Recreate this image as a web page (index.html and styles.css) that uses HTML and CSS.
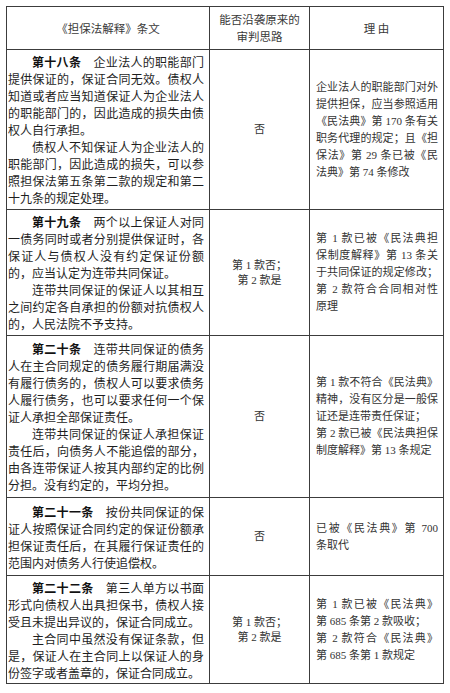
FILE: index.html
```html
<!DOCTYPE html>
<html lang="zh-CN">
<head>
<meta charset="utf-8">
<title>担保法解释条文对照</title>
<link rel="stylesheet" href="styles.css">
</head>
<body>
<div class="sheet">
  <div class="cell head">《担保法解释》条文</div>
  <div class="cell head">能否沿袭原来的<br>审判思路</div>
  <div class="cell head">理 由</div>

  <div class="cell clause">
    <p><b>第十八条</b>　企业法人的职能部门提供保证的，保证合同无效。债权人知道或者应当知道保证人为企业法人的职能部门的，因此造成的损失由债权人自行承担。</p>
    <p>债权人不知保证人为企业法人的职能部门，因此造成的损失，可以参照担保法第五条第二款的规定和第二十九条的规定处理。</p>
  </div>
  <div class="cell verdict">否</div>
  <div class="cell reason">
    <div class="ln">企业法人的职能部门对外</div>
    <div class="ln">提供担保，应当参照适用</div>
    <div class="ln">《民法典》第 170 条有关</div>
    <div class="ln">职务代理的规定；且《担</div>
    <div class="ln">保法》第 29 条已被《民</div>
    <div class="ln end">法典》第 74 条修改</div>
  </div>

  <div class="cell clause">
    <p><b>第十九条</b>　两个以上保证人对同一债务同时或者分别提供保证时，各保证人与债权人没有约定保证份额的，应当认定为连带共同保证。</p>
    <p>连带共同保证的保证人以其相互之间约定各自承担的份额对抗债权人的，人民法院不予支持。</p>
  </div>
  <div class="cell verdict">第 1 款否；<br>第 2 款是</div>
  <div class="cell reason">
    <div class="ln">第 1 款已被《民法典担</div>
    <div class="ln">保制度解释》第 13 条关</div>
    <div class="ln">于共同保证的规定修改；</div>
    <div class="ln">第 2 款符合合同相对性</div>
    <div class="ln end">原理</div>
  </div>

  <div class="cell clause">
    <p><b>第二十条</b>　连带共同保证的债务人在主合同规定的债务履行期届满没有履行债务的，债权人可以要求债务人履行债务，也可以要求任何一个保证人承担全部保证责任。</p>
    <p>连带共同保证的保证人承担保证责任后，向债务人不能追偿的部分，由各连带保证人按其内部约定的比例分担。没有约定的，平均分担。</p>
  </div>
  <div class="cell verdict">否</div>
  <div class="cell reason">
    <div class="ln">第 1 款不符合《民法典》</div>
    <div class="ln">精神，没有区分是一般保</div>
    <div class="ln end">证还是连带责任保证；</div>
    <div class="ln">第 2 款已被《民法典担保</div>
    <div class="ln end">制度解释》第 13 条规定</div>
  </div>

  <div class="cell clause">
    <p><b>第二十一条</b>　按份共同保证的保证人按照保证合同约定的保证份额承担保证责任后，在其履行保证责任的范围内对债务人行使追偿权。</p>
  </div>
  <div class="cell verdict">否</div>
  <div class="cell reason">
    <div class="ln">已被《民法典》第 700</div>
    <div class="ln end">条取代</div>
  </div>

  <div class="cell clause">
    <p><b>第二十二条</b>　第三人单方以书面形式向债权人出具担保书，债权人接受且未提出异议的，保证合同成立。</p>
    <p>主合同中虽然没有保证条款，但是，保证人在主合同上以保证人的身份签字或者盖章的，保证合同成立。</p>
  </div>
  <div class="cell verdict">第 1 款否；<br>第 2 款是</div>
  <div class="cell reason">
    <div class="ln">第 1 款已被《民法典》</div>
    <div class="ln end">第 685 条第 2 款吸收；</div>
    <div class="ln">第 2 款符合《民法典》</div>
    <div class="ln end">第 685 条第 1 款规定</div>
  </div>
</div>
</body>
</html>
```

FILE: styles.css
```css
html, body {
  margin: 0;
  padding: 0;
  background: #ffffff;
}

.sheet {
  display: grid;
  grid-template-columns: 202px 99px 133px;
  grid-template-rows: 42px 159px 125px 161px 77px 107px;
  gap: 1px;
  padding: 1px;
  width: max-content;
  margin: 6px 0 0 6px;
  background: #3c3c3c;
}

.cell {
  background: #ffffff;
  display: flex;
  flex-direction: column;
  justify-content: center;
  overflow: hidden;
}

.head {
  align-items: center;
  text-align: center;
  font-family: "Noto Sans CJK SC", sans-serif;
  font-size: 11.5px;
  line-height: 17px;
  color: #3a3a3a;
}

.clause {
  padding: 0 5px 0 1px;
  font-family: "Noto Sans CJK SC", sans-serif;
  font-size: 12px;
  line-height: 17px;
  color: #1e1e1e;
  text-align: justify;
}

.clause p {
  margin: 0;
  text-indent: 2em;
}

.clause b {
  font-weight: 700;
  color: #111111;
}

.verdict {
  align-items: center;
  text-align: center;
  font-family: "Liberation Serif", "Noto Sans CJK SC", serif;
  font-size: 11px;
  line-height: 15px;
  color: #333333;
}

.reason {
  padding: 0 5px 0 6px;
  font-family: "Liberation Serif", "Noto Sans CJK SC", serif;
  font-size: 11px;
  line-height: 17px;
  color: #333333;
}

.ln {
  text-align: justify;
  text-align-last: justify;
  white-space: nowrap;
}

.ln.end {
  text-align-last: left;
}
```
